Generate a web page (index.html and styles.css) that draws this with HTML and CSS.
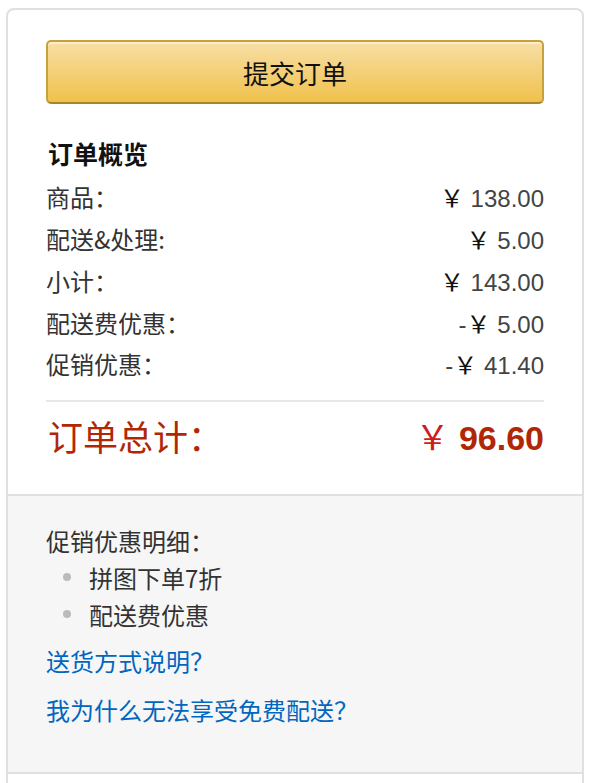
FILE: index.html
```html
<!DOCTYPE html>
<html lang="zh-CN">
<head>
<meta charset="utf-8">
<title>订单概览</title>
<link rel="stylesheet" href="styles.css">
</head>
<body>
<div class="box">
  <div class="section summary">
    <button class="submit" type="button">提交订单</button>
    <h3 class="title">订单概览</h3>
    <div class="row"><span class="label">商品：</span><span class="amount"><span class="yen">￥</span> 138.00</span></div>
    <div class="row"><span class="label">配送&amp;处理:</span><span class="amount"><span class="yen">￥</span> 5.00</span></div>
    <div class="row"><span class="label">小计：</span><span class="amount"><span class="yen">￥</span> 143.00</span></div>
    <div class="row"><span class="label">配送费优惠：</span><span class="amount">-<span class="yen">￥</span> 5.00</span></div>
    <div class="row"><span class="label">促销优惠：</span><span class="amount">-<span class="yen">￥</span> 41.40</span></div>
    <div class="total"><span class="label">订单总计：</span><span class="amount"><span class="yen">￥</span> 96.60</span></div>
  </div>
  <div class="section details">
    <div class="detail-title">促销优惠明细：</div>
    <ul class="promo-list">
      <li>拼图下单7折</li>
      <li>配送费优惠</li>
    </ul>
    <a class="link first" href="#">送货方式说明？</a>
    <a class="link" href="#">我为什么无法享受免费配送？</a>
  </div>
  <div class="section tail"></div>
</div>
</body>
</html>
```

FILE: styles.css
```css
html, body {
  margin: 0;
  padding: 0;
  background: #fff;
}

body {
  font-family: "Liberation Sans", "Noto Sans CJK SC", sans-serif;
  color: #333;
}

.box {
  margin: 8px 0 0 6px;
  width: 578px;
  box-sizing: border-box;
  border: 2px solid #e0e0e0;
  border-radius: 8px 8px 0 0;
}

.section {
  box-sizing: border-box;
}

.summary {
  padding: 30px 38px 27px 38px;
  border-bottom: 2px solid #e0e0e0;
}

.submit {
  display: block;
  width: 100%;
  height: 64px;
  margin: 0 0 28px 0;
  padding: 0;
  box-sizing: border-box;
  border: 2px solid #c6a23f;
  border-bottom-color: #a6852d;
  border-radius: 5px;
  background: linear-gradient(to bottom, #f7dfa5, #f0c14b);
  box-shadow: inset 0 2px 0 rgba(255, 255, 255, 0.45);
  font-family: "Noto Sans CJK SC", sans-serif;
  font-size: 26px;
  color: #111;
  cursor: pointer;
}

.title {
  margin: 0 0 2px 0;
  font-family: "Noto Sans CJK SC", sans-serif;
  font-size: 25px;
  font-weight: bold;
  line-height: 42px;
  color: #111;
  padding-left: 2px;
}

.row {
  display: flex;
  justify-content: space-between;
  align-items: center;
  height: 41.75px;
  font-size: 24px;
}

.label {
  font-family: "Noto Sans CJK SC", sans-serif;
  color: #333;
}

.amount {
  color: #444;
}

.yen {
  font-family: "Noto Sans CJK SC", sans-serif;
  color: #111;
}

.total {
  display: flex;
  justify-content: space-between;
  align-items: center;
  margin-top: 15px;
  border-top: 2px solid #e7e7e7;
  height: 62px;
  padding-top: 3px;
  color: #b12704;
}

.total .label {
  color: #b12704;
  font-size: 35px;
  padding-left: 2px;
}

.total .amount {
  color: #b12704;
  font-size: 34px;
  font-weight: bold;
}

.total .yen {
  color: #d01b1b;
  font-weight: normal;
}

.details {
  background: #f6f6f6;
  padding: 26px 38px 44px 38px;
  border-bottom: 2px solid #e0e0e0;
  font-family: "Noto Sans CJK SC", sans-serif;
  font-size: 24px;
}

.detail-title {
  line-height: 37px;
  color: #333;
}

.promo-list {
  margin: 0;
  padding: 0;
  list-style: none;
}

.promo-list li {
  display: flex;
  align-items: center;
  line-height: 37px;
  color: #333;
}

.promo-list li::before {
  content: "";
  width: 8px;
  height: 8px;
  border-radius: 50%;
  background: #bbb;
  margin: 0 18px 0 17px;
}

.link {
  display: block;
  line-height: 37px;
  margin-top: 12px;
  color: #0066c0;
  text-decoration: none;
}

.link.first {
  margin-top: 9px;
}

.tail {
  height: 40px;
}
```
